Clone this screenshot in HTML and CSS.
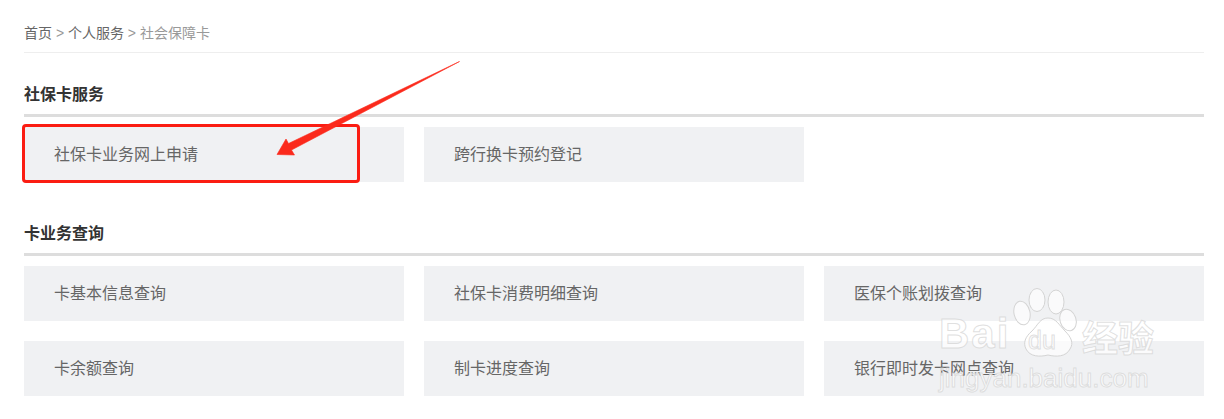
FILE: index.html
```html
<!DOCTYPE html>
<html lang="zh-CN">
<head>
    <meta charset="UTF-8">
    <title>社会保障卡</title>
    <link rel="stylesheet" href="styles.css">
</head>
<body>

<div id="page">
    <div class="crumbs">
        <a>首页</a> <span class="sep">&gt;</span> <a>个人服务</a> <span class="sep">&gt;</span> <span class="current">社会保障卡</span>
    </div>

    <div class="section first">
        <h3 class="section-title">社保卡服务</h3>
        <div class="card-grid">
            <div class="card">社保卡业务网上申请</div>
            <div class="card">跨行换卡预约登记</div>
        </div>
    </div>

    <div class="section">
        <h3 class="section-title">卡业务查询</h3>
        <div class="card-grid">
            <div class="card">卡基本信息查询</div>
            <div class="card">社保卡消费明细查询</div>
            <div class="card">医保个账划拨查询</div>
            <div class="card">卡余额查询</div>
            <div class="card">制卡进度查询</div>
            <div class="card">银行即时发卡网点查询</div>
        </div>
    </div>
</div>

<!-- red marks drawn on top of the screenshot -->
<div class="red-box"></div>
<svg class="arrow" width="1224" height="419" viewBox="0 0 1224 419">
    <path d="M459.500 61.500 L288.500 143.500 L286 139 L277 154.500 L294.500 155 L291.500 150 Z" fill="#fb2a1c" stroke="#fb2a1c" stroke-width="0.6"/>
</svg>

<!-- watermark -->
<div class="watermark">
    <svg class="paw" width="70" height="75" viewBox="0 0 70 75">
        <g fill="#fff" fill-opacity="0.65" stroke="#d4d4d4" stroke-width="1">
            <ellipse cx="12" cy="28" rx="8" ry="12" transform="rotate(-12 12 28)"/>
            <ellipse cx="27" cy="15" rx="8" ry="11.500"/>
            <ellipse cx="46" cy="17" rx="8" ry="12"/>
            <ellipse cx="58" cy="35" rx="8" ry="11" transform="rotate(-18 58 35)"/>
            <path d="M38 33 C30 33 28 40 22 46 C15 52 13 58 16 64 C20 72 30 72 38 70 C46 72 56 72 60 64 C64 58 61 52 55 46 C49 40 46 33 38 33 Z"/>
        </g>
    </svg>
    <div class="wm-logo"><span class="wm-bai">Bai</span><span class="wm-du">du</span><span class="wm-cn">经验</span></div>
    <div class="wm-url">jingyan.baidu.com</div>
</div>

</body>
</html>
```
FILE: styles.css
```css
* {
    box-sizing: border-box;
}

body {
    margin: 0;
    height: 419px;
    overflow: hidden;
    background-color: #fff;
    font-family: "Liberation Sans", "Noto Sans CJK SC", sans-serif;
    position: relative;
}

#page {
    width: 1180px;
    margin-left: 24px;
}

.crumbs {
    height: 53px;
    padding-top: 24px;
    font-size: 14px;
    line-height: 18px;
    color: #666;
    border-bottom: 1px solid #eee;
}

.crumbs .sep,
.crumbs .current {
    color: #999;
}

.section {
    margin-top: 39px;
}

.section.first {
    margin-top: 29px;
}

.section-title {
    margin: 0 0 10px;
    height: 35px;
    font-size: 16px;
    line-height: 26px;
    font-weight: bold;
    color: #333;
    border-bottom: 3px solid #ddd;
}

.card-grid {
    display: grid;
    grid-template-columns: repeat(3, 380px);
    grid-auto-rows: 55px;
    gap: 20px;
}

.card {
    background-color: #f0f1f3;
    padding-left: 30px;
    font-size: 16px;
    line-height: 55px;
    color: #666;
}

.red-box {
    position: absolute;
    left: 22px;
    top: 124px;
    width: 338px;
    height: 59px;
    border: 3px solid #fb1c12;
    border-radius: 4px;
}

.arrow {
    position: absolute;
    left: 0;
    top: 0;
}

.watermark {
    position: absolute;
    left: 939px;
    top: 285px;
    width: 220px;
    height: 110px;
}

.paw {
    position: absolute;
    left: 71px;
    top: 0;
}

.wm-logo {
    position: absolute;
    left: 0;
    top: 26px;
    white-space: nowrap;
    line-height: 46px;
}

.wm-bai,
.wm-du,
.wm-cn,
.wm-url {
    color: rgba(255, 255, 255, 0.75);
    -webkit-text-stroke: 1px rgba(210, 210, 210, 0.7);
}

.wm-bai {
    font-size: 42px;
    font-weight: bold;
    letter-spacing: 2px;
}

.wm-du {
    position: absolute;
    left: 89px;
    top: 6px;
    font-size: 25px;
}

.wm-cn {
    position: absolute;
    left: 143px;
    top: 6px;
    font-size: 36px;
    font-weight: bold;
}

.wm-url {
    position: absolute;
    left: 0;
    top: 78px;
    font-size: 26px;
    line-height: 30px;
    white-space: nowrap;
}
```
